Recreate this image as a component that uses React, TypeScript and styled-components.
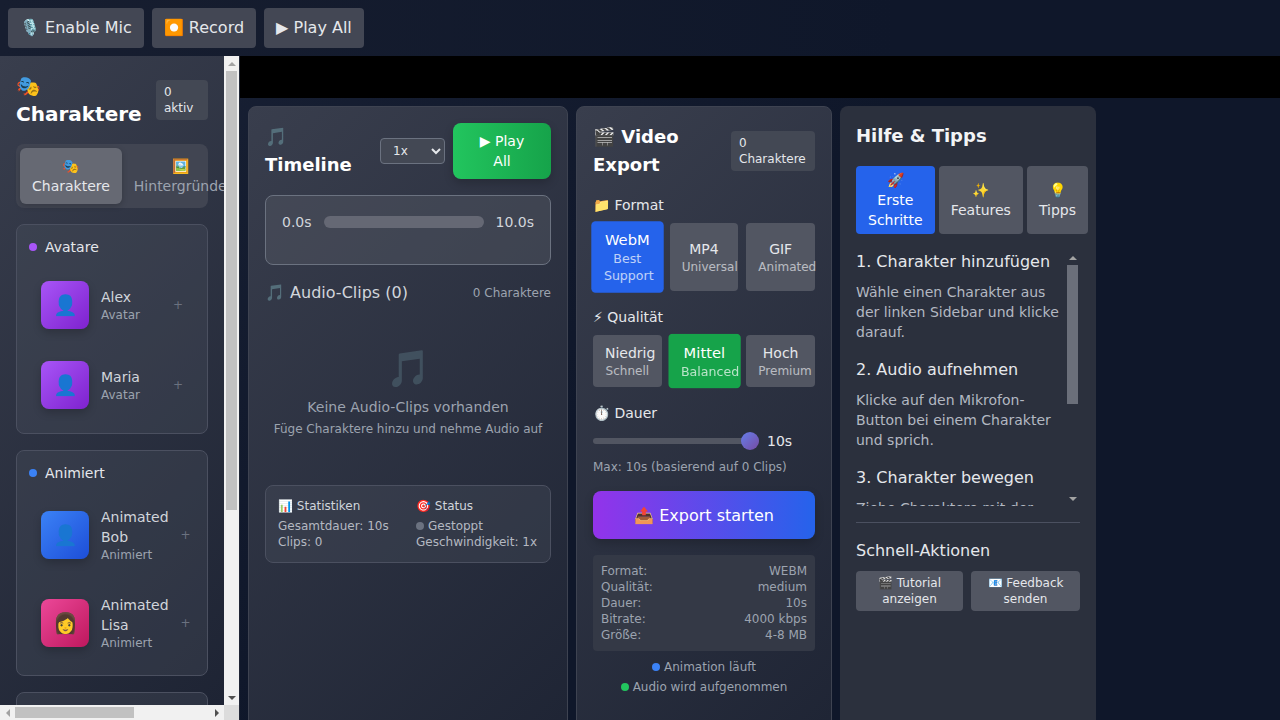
import styled, { createGlobalStyle } from 'styled-components';

const GlobalStyle = createGlobalStyle`
  * {
    box-sizing: border-box;
  }
  html,
  body {
    margin: 0;
    height: 100%;
    overflow: hidden;
    background: #0f172a;
  }
  body {
    font-family: 'DejaVu Sans', sans-serif;
    color: #fff;
  }
  button,
  select {
    font-family: inherit;
  }
`;

const characterGroups = [
  {
    title: 'Avatare',
    dot: '#a855f7',
    items: [
      { name: 'Alex', kind: 'Avatar', icon: '👤', tone: 'purple' },
      { name: 'Maria', kind: 'Avatar', icon: '👤', tone: 'purple' },
    ],
  },
  {
    title: 'Animiert',
    dot: '#3b82f6',
    items: [
      { name: 'Animated Bob', kind: 'Animiert', icon: '👤', tone: 'blue' },
      { name: 'Animated Lisa', kind: 'Animiert', icon: '👩', tone: 'pink' },
    ],
  },
];

const avatarTones: Record<string, string> = {
  purple: 'linear-gradient(135deg, #a855f7, #7e22ce)',
  blue: 'linear-gradient(135deg, #3b82f6, #1d4ed8)',
  pink: 'linear-gradient(135deg, #ec4899, #be185d)',
};

const formats = [
  { name: 'WebM', note: 'Best Support', active: true },
  { name: 'MP4', note: 'Universal' },
  { name: 'GIF', note: 'Animated' },
];

const qualities = [
  { name: 'Niedrig', note: 'Schnell' },
  { name: 'Mittel', note: 'Balanced', active: true },
  { name: 'Hoch', note: 'Premium' },
];

const exportInfo = [
  ['Format:', 'WEBM'],
  ['Qualität:', 'medium'],
  ['Dauer:', '10s'],
  ['Bitrate:', '4000 kbps'],
  ['Größe:', '4-8 MB'],
];

const helpSteps = [
  {
    title: '1. Charakter hinzufügen',
    text: 'Wähle einen Charakter aus der linken Sidebar und klicke darauf.',
  },
  {
    title: '2. Audio aufnehmen',
    text: 'Klicke auf den Mikrofon-Button bei einem Charakter und sprich.',
  },
  {
    title: '3. Charakter bewegen',
    text: 'Ziehe Charaktere mit der Maus an die gewünschte Position.',
  },
];

export default function App() {
  return (
    <Page>
      <GlobalStyle />
      <TopBar>
        <TopButton>🎙️ Enable Mic</TopButton>
        <TopButton>⏺️ Record</TopButton>
        <TopButton>▶ Play All</TopButton>
      </TopBar>
      <Main>
        <Sidebar>
          <SidebarBody>
            <SidebarContent>
              <SidebarHeader>
                <SidebarTitle>🎭 Charaktere</SidebarTitle>
                <CountBadge>0 aktiv</CountBadge>
              </SidebarHeader>
              <SidebarTabs>
                <SidebarTab $active>
                  <div>🎭</div>
                  <div>Charaktere</div>
                </SidebarTab>
                <SidebarTab>
                  <div>🖼️</div>
                  <div>Hintergründe</div>
                </SidebarTab>
              </SidebarTabs>
              {characterGroups.map((group) => (
                <GroupCard key={group.title}>
                  <GroupTitle>
                    <Dot $color={group.dot} />
                    {group.title}
                  </GroupTitle>
                  <CharacterList>
                    {group.items.map((item) => (
                      <CharacterRow key={item.name}>
                        <Avatar $tone={item.tone}>{item.icon}</Avatar>
                        <CharacterText>
                          <CharacterName>{item.name}</CharacterName>
                          <CharacterKind>{item.kind}</CharacterKind>
                        </CharacterText>
                        <AddMark>+</AddMark>
                      </CharacterRow>
                    ))}
                  </CharacterList>
                </GroupCard>
              ))}
              <LowerGroup />
            </SidebarContent>
            <VerticalBar>
              <BarButton>
                <Arrow $dir="up" />
              </BarButton>
              <BarTrack>
                <VerticalThumb />
              </BarTrack>
              <BarButton>
                <Arrow $dir="down" $dark />
              </BarButton>
            </VerticalBar>
          </SidebarBody>
          <BottomBarRow>
            <HorizontalBar>
              <BarButton>
                <Arrow $dir="left" />
              </BarButton>
              <HorizontalTrack>
                <HorizontalThumb />
              </HorizontalTrack>
              <BarButton>
                <Arrow $dir="right" $dark />
              </BarButton>
            </HorizontalBar>
            <BarCorner />
          </BottomBarRow>
        </Sidebar>
        <Workspace>
          <Stage />
          <PanelRow>
            <TimelinePanel>
              <PanelHeader>
                <PanelTitle>🎵 Timeline</PanelTitle>
                <TimelineControls>
                  <SpeedSelect defaultValue="1x">
                    <option>0.5x</option>
                    <option>1x</option>
                    <option>2x</option>
                  </SpeedSelect>
                  <PlayButton>▶ Play All</PlayButton>
                </TimelineControls>
              </PanelHeader>
              <ScrubCard>
                <ScrubRow>
                  <span>0.0s</span>
                  <ScrubTrack />
                  <span>10.0s</span>
                </ScrubRow>
              </ScrubCard>
              <ClipsHeader>
                <ClipsTitle>🎵 Audio-Clips (0)</ClipsTitle>
                <ClipsCount>0 Charaktere</ClipsCount>
              </ClipsHeader>
              <EmptyState>
                <EmptyIcon>🎵</EmptyIcon>
                <EmptyTitle>Keine Audio-Clips vorhanden</EmptyTitle>
                <EmptyHint>Füge Charaktere hinzu und nehme Audio auf</EmptyHint>
              </EmptyState>
              <StatsCard>
                <div>
                  <StatsTitle>📊 Statistiken</StatsTitle>
                  <div>Gesamtdauer: 10s</div>
                  <div>Clips: 0</div>
                </div>
                <div>
                  <StatsTitle>🎯 Status</StatsTitle>
                  <StoppedLine>
                    <Dot $color="#6b7280" />
                    Gestoppt
                  </StoppedLine>
                  <div>Geschwindigkeit: 1x</div>
                </div>
              </StatsCard>
            </TimelinePanel>

            <PanelBase>
              <PanelHeader>
                <PanelTitle>🎬 Video Export</PanelTitle>
                <ExportBadge>0 Charaktere</ExportBadge>
              </PanelHeader>
              <OptionLabel>📁 Format</OptionLabel>
              <OptionGrid>
                {formats.map((f) => (
                  <OptionButton key={f.name} $active={f.active} $color="#2563eb">
                    <div>{f.name}</div>
                    <OptionNote>{f.note}</OptionNote>
                  </OptionButton>
                ))}
              </OptionGrid>
              <OptionLabel>⚡ Qualität</OptionLabel>
              <OptionGrid>
                {qualities.map((q) => (
                  <OptionButton key={q.name} $active={q.active} $color="#16a34a">
                    <div>{q.name}</div>
                    <OptionNote>{q.note}</OptionNote>
                  </OptionButton>
                ))}
              </OptionGrid>
              <OptionLabel>⏱️ Dauer</OptionLabel>
              <DurationRow>
                <DurationSlider type="range" min={1} max={10} defaultValue={10} />
                <DurationValue>10s</DurationValue>
              </DurationRow>
              <DurationHint>Max: 10s (basierend auf 0 Clips)</DurationHint>
              <ExportButton>📤 Export starten</ExportButton>
              <InfoBox>
                {exportInfo.map(([label, value]) => (
                  <InfoRow key={label}>
                    <span>{label}</span>
                    <span>{value}</span>
                  </InfoRow>
                ))}
              </InfoBox>
              <StatusLine>
                <Dot $color="#3b82f6" />
                Animation läuft
              </StatusLine>
              <StatusLine>
                <Dot $color="#22c55e" />
                Audio wird aufgenommen
              </StatusLine>
            </PanelBase>

            <HelpPanel>
              <HelpTitle>Hilfe &amp; Tipps</HelpTitle>
              <HelpTabs>
                <HelpTab $active>
                  <div>🚀</div>
                  <div>Erste Schritte</div>
                </HelpTab>
                <HelpTab>
                  <div>✨</div>
                  <div>Features</div>
                </HelpTab>
                <HelpTab>
                  <div>💡</div>
                  <div>Tipps</div>
                </HelpTab>
              </HelpTabs>
              <HelpFrame>
                <HelpContent>
                  {helpSteps.map((step) => (
                    <HelpStep key={step.title}>
                      <HelpHeading>{step.title}</HelpHeading>
                      <HelpText>{step.text}</HelpText>
                    </HelpStep>
                  ))}
                </HelpContent>
                <HelpBar>
                  <BarButton>
                    <Arrow $dir="up" />
                  </BarButton>
                  <BarTrack>
                    <HelpThumb />
                  </BarTrack>
                  <BarButton>
                    <Arrow $dir="down" />
                  </BarButton>
                </HelpBar>
              </HelpFrame>
              <QuickSection>
                <HelpHeading>Schnell-Aktionen</HelpHeading>
                <QuickRow>
                  <QuickButton>🎬 Tutorial anzeigen</QuickButton>
                  <QuickButton>📧 Feedback senden</QuickButton>
                </QuickRow>
              </QuickSection>
            </HelpPanel>
          </PanelRow>
        </Workspace>
      </Main>
    </Page>
  );
}

const Page = styled.div`
  display: flex;
  flex-direction: column;
  width: 100%;
  height: 100vh;
  overflow: hidden;
  background: linear-gradient(135deg, #1a2236 0%, #0f172a 50%);
`;

const TopBar = styled.header`
  display: flex;
  flex: none;
  gap: 8px;
  height: 56px;
  padding: 8px;
  background: linear-gradient(90deg, #171e30, #0f172a 70%);
`;

const TopButton = styled.button`
  padding: 8px 12px;
  border: none;
  border-radius: 4px;
  background: #434754;
  color: #e5e7eb;
  font-size: 16px;
  line-height: 24px;
`;

const Main = styled.main`
  display: flex;
  flex: 1;
  min-height: 0;
`;

const Sidebar = styled.aside`
  display: flex;
  flex: none;
  flex-direction: column;
  width: 240px;
  border-right: 1px solid #1f2535;
  background: linear-gradient(135deg, #393e4d, #1d2333);
`;

const SidebarBody = styled.div`
  display: flex;
  flex: 1;
  min-height: 0;
`;

const SidebarContent = styled.div`
  flex: 1;
  min-width: 0;
  padding: 16px;
  overflow: hidden;
`;

const VerticalBar = styled.div`
  display: flex;
  flex: none;
  flex-direction: column;
  width: 15px;
  background: #f1f1f1;
`;

const BarButton = styled.div`
  display: flex;
  flex: none;
  align-items: center;
  justify-content: center;
  width: 15px;
  height: 15px;
`;

const arrowSides = {
  up: ['top', 'bottom'],
  down: ['bottom', 'top'],
  left: ['left', 'right'],
  right: ['right', 'left'],
};

const Arrow = styled.span<{ $dir: 'up' | 'down' | 'left' | 'right'; $dark?: boolean }>`
  width: 0;
  height: 0;
  border: 4px solid transparent;
  border-${(p) => arrowSides[p.$dir][0]}-width: 0;
  border-${(p) => arrowSides[p.$dir][1]}-color: ${(p) => (p.$dark ? '#505050' : '#a3a3a3')};
`;

const BarTrack = styled.div`
  flex: 1;
  min-height: 0;
`;

const VerticalThumb = styled.div`
  width: 11px;
  height: 439px;
  margin: 0 2px;
  background: #c1c1c1;
`;

const BottomBarRow = styled.div`
  display: flex;
  flex: none;
  height: 15px;
`;

const HorizontalBar = styled.div`
  display: flex;
  flex: 1;
  background: #f1f1f1;
`;

const HorizontalTrack = styled.div`
  flex: 1;
  padding: 2px 0;
`;

const HorizontalThumb = styled.div`
  width: 119px;
  height: 11px;
  background: #c1c1c1;
`;

const BarCorner = styled.div`
  flex: none;
  width: 15px;
  background: #dcdcdc;
`;

const SidebarHeader = styled.div`
  display: flex;
  align-items: center;
  justify-content: space-between;
  margin-bottom: 16px;
`;

const SidebarTitle = styled.h2`
  margin: 0;
  font-size: 20px;
  line-height: 28px;
  font-weight: 700;
`;

const PanelTitle = styled(SidebarTitle)`
  font-size: 18px;
`;

const CountBadge = styled.div`
  flex: none;
  width: 52px;
  padding: 4px 8px;
  border-radius: 4px;
  background: #434854;
  color: #e5e7eb;
  font-size: 12px;
  line-height: 16px;
`;

const ExportBadge = styled(CountBadge)`
  width: 84px;
`;

const SidebarTabs = styled.div`
  display: flex;
  margin-bottom: 16px;
  padding: 4px;
  border-radius: 8px;
  background: #414552;
`;

const SidebarTab = styled.div<{ $active?: boolean }>`
  flex: none;
  padding: 8px 12px;
  border-radius: 6px;
  background: ${(p) => (p.$active ? '#666973' : 'transparent')};
  color: ${(p) => (p.$active ? '#e5e7eb' : '#9ca3af')};
  box-shadow: ${(p) => (p.$active ? '0 2px 6px rgba(0, 0, 0, 0.2)' : 'none')};
  font-size: 14px;
  line-height: 20px;
  text-align: center;
`;

const GroupCard = styled.section`
  margin-bottom: 16px;
  padding: 12px;
  border: 1px solid #4b5060;
  border-radius: 8px;
  background: rgba(80, 85, 100, 0.3);
`;

const GroupTitle = styled.h3`
  display: flex;
  align-items: center;
  gap: 8px;
  margin: 0 0 12px;
  color: #e5e7eb;
  font-size: 14px;
  line-height: 20px;
  font-weight: 400;
`;

const Dot = styled.span<{ $color: string }>`
  display: inline-block;
  flex: none;
  width: 8px;
  height: 8px;
  border-radius: 50%;
  background: ${(p) => p.$color};
`;

const CharacterList = styled.div`
  display: flex;
  flex-direction: column;
  gap: 8px;
`;

const CharacterRow = styled.div`
  display: flex;
  align-items: center;
  gap: 12px;
  padding: 12px;
`;

const Avatar = styled.div<{ $tone: string }>`
  display: flex;
  flex: none;
  align-items: center;
  justify-content: center;
  width: 48px;
  height: 48px;
  border-radius: 8px;
  background: ${(p) => avatarTones[p.$tone]};
  box-shadow: 0 4px 8px rgba(0, 0, 0, 0.2);
  font-size: 20px;
`;

const CharacterText = styled.div`
  flex: 1;
`;

const CharacterName = styled.div`
  color: #d1d5db;
  font-size: 14px;
  line-height: 20px;
`;

const CharacterKind = styled.div`
  color: #9ca3af;
  font-size: 12px;
  line-height: 16px;
`;

const AddMark = styled.span`
  color: #6b7280;
  font-size: 12px;
`;

const LowerGroup = styled(GroupCard)`
  height: 263px;
`;

const Workspace = styled.div`
  display: flex;
  flex: 1;
  flex-direction: column;
  min-width: 0;
`;

const Stage = styled.div`
  flex: none;
  height: 42px;
  background: #000;
`;

const PanelRow = styled.div`
  display: flex;
  flex: none;
  gap: 8px;
  height: 700px;
  padding: 8px;
`;

const PanelBase = styled.section`
  flex: none;
  width: 256px;
  padding: 16px;
  border: 1px solid #3e4351;
  border-radius: 8px;
  background: linear-gradient(135deg, #393e4d, #1d2333);
`;

const TimelinePanel = styled(PanelBase)`
  width: 320px;
`;

const PanelHeader = styled.div`
  display: flex;
  align-items: center;
  justify-content: space-between;
  margin-bottom: 16px;
`;

const TimelineControls = styled.div`
  display: flex;
  align-items: center;
  gap: 8px;
`;

const SpeedSelect = styled.select`
  width: 65px;
  height: 26px;
  padding: 0 8px;
  border: 1px solid #6b7280;
  border-radius: 4px;
  background: #434854;
  color: #e5e7eb;
  font-size: 12px;
`;

const PlayButton = styled.button`
  width: 98px;
  padding: 8px 16px;
  border: none;
  border-radius: 8px;
  background: linear-gradient(90deg, #22c55e, #16a34a);
  box-shadow: 0 4px 10px rgba(0, 0, 0, 0.2);
  color: #fff;
  font-size: 14px;
  line-height: 20px;
`;

const ScrubCard = styled.div`
  margin-bottom: 16px;
  padding: 16px;
  border: 1px solid #6b7280;
  border-radius: 8px;
  background: rgba(85, 88, 100, 0.45);
`;

const ScrubRow = styled.div`
  display: flex;
  align-items: center;
  gap: 12px;
  margin-bottom: 16px;
  color: #d1d5db;
  font-size: 14px;
  line-height: 20px;
`;

const ScrubTrack = styled.div`
  flex: 1;
  height: 12px;
  border-radius: 6px;
  background: #656874;
`;

const ClipsHeader = styled.div`
  display: flex;
  align-items: center;
  justify-content: space-between;
  margin-bottom: 12px;
`;

const ClipsTitle = styled.div`
  color: #d1d5db;
  font-size: 16px;
  line-height: 24px;
`;

const ClipsCount = styled.div`
  color: #9ca3af;
  font-size: 12px;
`;

const EmptyState = styled.div`
  padding: 32px 0;
  color: #9ca3af;
  text-align: center;
`;

const EmptyIcon = styled.div`
  margin-bottom: 8px;
  font-size: 36px;
  line-height: 40px;
  opacity: 0.5;
`;

const EmptyTitle = styled.div`
  font-size: 14px;
  line-height: 20px;
`;

const EmptyHint = styled.div`
  margin-top: 4px;
  font-size: 12px;
  line-height: 16px;
`;

const StatsCard = styled.div`
  display: grid;
  grid-template-columns: 1fr 1fr;
  gap: 16px;
  margin-top: 16px;
  padding: 12px;
  border: 1px solid #4b5060;
  border-radius: 8px;
  background: rgba(80, 85, 100, 0.3);
  color: #b4b8c1;
  font-size: 12px;
  line-height: 16px;
  white-space: nowrap;
`;

const StatsTitle = styled.div`
  margin-bottom: 4px;
  color: #d1d5db;
`;

const StoppedLine = styled.div`
  display: flex;
  align-items: center;
  gap: 4px;
`;

const OptionLabel = styled.div`
  margin-bottom: 8px;
  color: #e5e7eb;
  font-size: 14px;
  line-height: 20px;
`;

const OptionGrid = styled.div`
  display: grid;
  grid-template-columns: repeat(3, minmax(0, 1fr));
  gap: 8px;
  margin-bottom: 16px;
`;

const OptionButton = styled.button<{ $active?: boolean; $color: string }>`
  padding: 8px 12px;
  border: none;
  border-radius: 4px;
  background: ${(p) => (p.$active ? p.$color : '#525662')};
  color: ${(p) => (p.$active ? '#fff' : '#e5e7eb')};
  font-size: 14px;
  line-height: 20px;
  transform: ${(p) => (p.$active ? 'scale(1.05)' : 'none')};
`;

const OptionNote = styled.div`
  font-size: 12px;
  line-height: 16px;
  opacity: 0.7;
`;

const DurationRow = styled.div`
  display: flex;
  align-items: center;
  gap: 8px;
`;

const DurationSlider = styled.input`
  flex: 1;
  min-width: 0;
  height: 6px;
  margin: 0;
  border-radius: 3px;
  background: #525662;
  appearance: none;

  &::-webkit-slider-thumb {
    width: 18px;
    height: 18px;
    border-radius: 50%;
    background: linear-gradient(135deg, #667eea, #764ba2);
    appearance: none;
  }
`;

const DurationValue = styled.span`
  width: 48px;
  color: #e5e7eb;
  font-size: 14px;
  line-height: 20px;
`;

const DurationHint = styled.div`
  margin: 8px 0 16px;
  color: #9ca3af;
  font-size: 12px;
  line-height: 16px;
`;

const ExportButton = styled.button`
  width: 100%;
  height: 48px;
  margin-bottom: 16px;
  border: none;
  border-radius: 8px;
  background: linear-gradient(90deg, #9333ea, #2563eb);
  box-shadow: 0 4px 10px rgba(0, 0, 0, 0.2);
  color: #fff;
  font-size: 16px;
`;

const InfoBox = styled.div`
  margin-bottom: 8px;
  padding: 8px;
  border-radius: 4px;
  background: #343946;
  color: #9ca3af;
  font-size: 12px;
  line-height: 16px;
`;

const InfoRow = styled.div`
  display: flex;
  justify-content: space-between;
`;

const StatusLine = styled.div`
  display: flex;
  align-items: center;
  justify-content: center;
  gap: 4px;
  margin-bottom: 4px;
  color: #9ca3af;
  font-size: 12px;
  line-height: 16px;
`;

const HelpPanel = styled(PanelBase)`
  border: none;
  background: #2b303d;
`;

const HelpTitle = styled.h2`
  margin: 0 0 16px;
  color: #f3f4f6;
  font-size: 18px;
  line-height: 28px;
  font-weight: 700;
`;

const HelpTabs = styled.div`
  display: flex;
  gap: 4px;
  margin-bottom: 16px;
`;

const HelpTab = styled.button<{ $active?: boolean }>`
  flex: 1 1 auto;
  width: min-content;
  padding: 4px 12px;
  border: none;
  border-radius: 4px;
  background: ${(p) => (p.$active ? '#2563eb' : '#525662')};
  color: ${(p) => (p.$active ? '#fff' : '#e5e7eb')};
  font-size: 14px;
  line-height: 20px;
`;

const HelpFrame = styled.div`
  display: flex;
  height: 256px;
`;

const HelpContent = styled.div`
  flex: 1;
  min-width: 0;
  overflow: hidden;
`;

const HelpBar = styled.div`
  display: flex;
  flex: none;
  flex-direction: column;
  width: 15px;
`;

const HelpThumb = styled.div`
  width: 11px;
  height: 139px;
  margin: 0 2px;
  background: #6b6f7a;
`;

const HelpStep = styled.div`
  margin-bottom: 16px;
`;

const HelpHeading = styled.h3`
  margin: 0 0 8px;
  color: #e5e7eb;
  font-size: 16px;
  line-height: 24px;
  font-weight: 400;
`;

const HelpText = styled.p`
  margin: 0;
  color: #b3b8c2;
  font-size: 14px;
  line-height: 20px;
`;

const QuickSection = styled.div`
  margin-top: 16px;
  padding-top: 16px;
  border-top: 1px solid #4b5060;
`;

const QuickRow = styled.div`
  display: grid;
  grid-template-columns: 107px 109px;
  gap: 8px;
`;

const QuickButton = styled.button`
  padding: 4px 8px;
  border: none;
  border-radius: 4px;
  background: #525662;
  color: #e5e7eb;
  font-size: 12px;
  line-height: 16px;
`;
